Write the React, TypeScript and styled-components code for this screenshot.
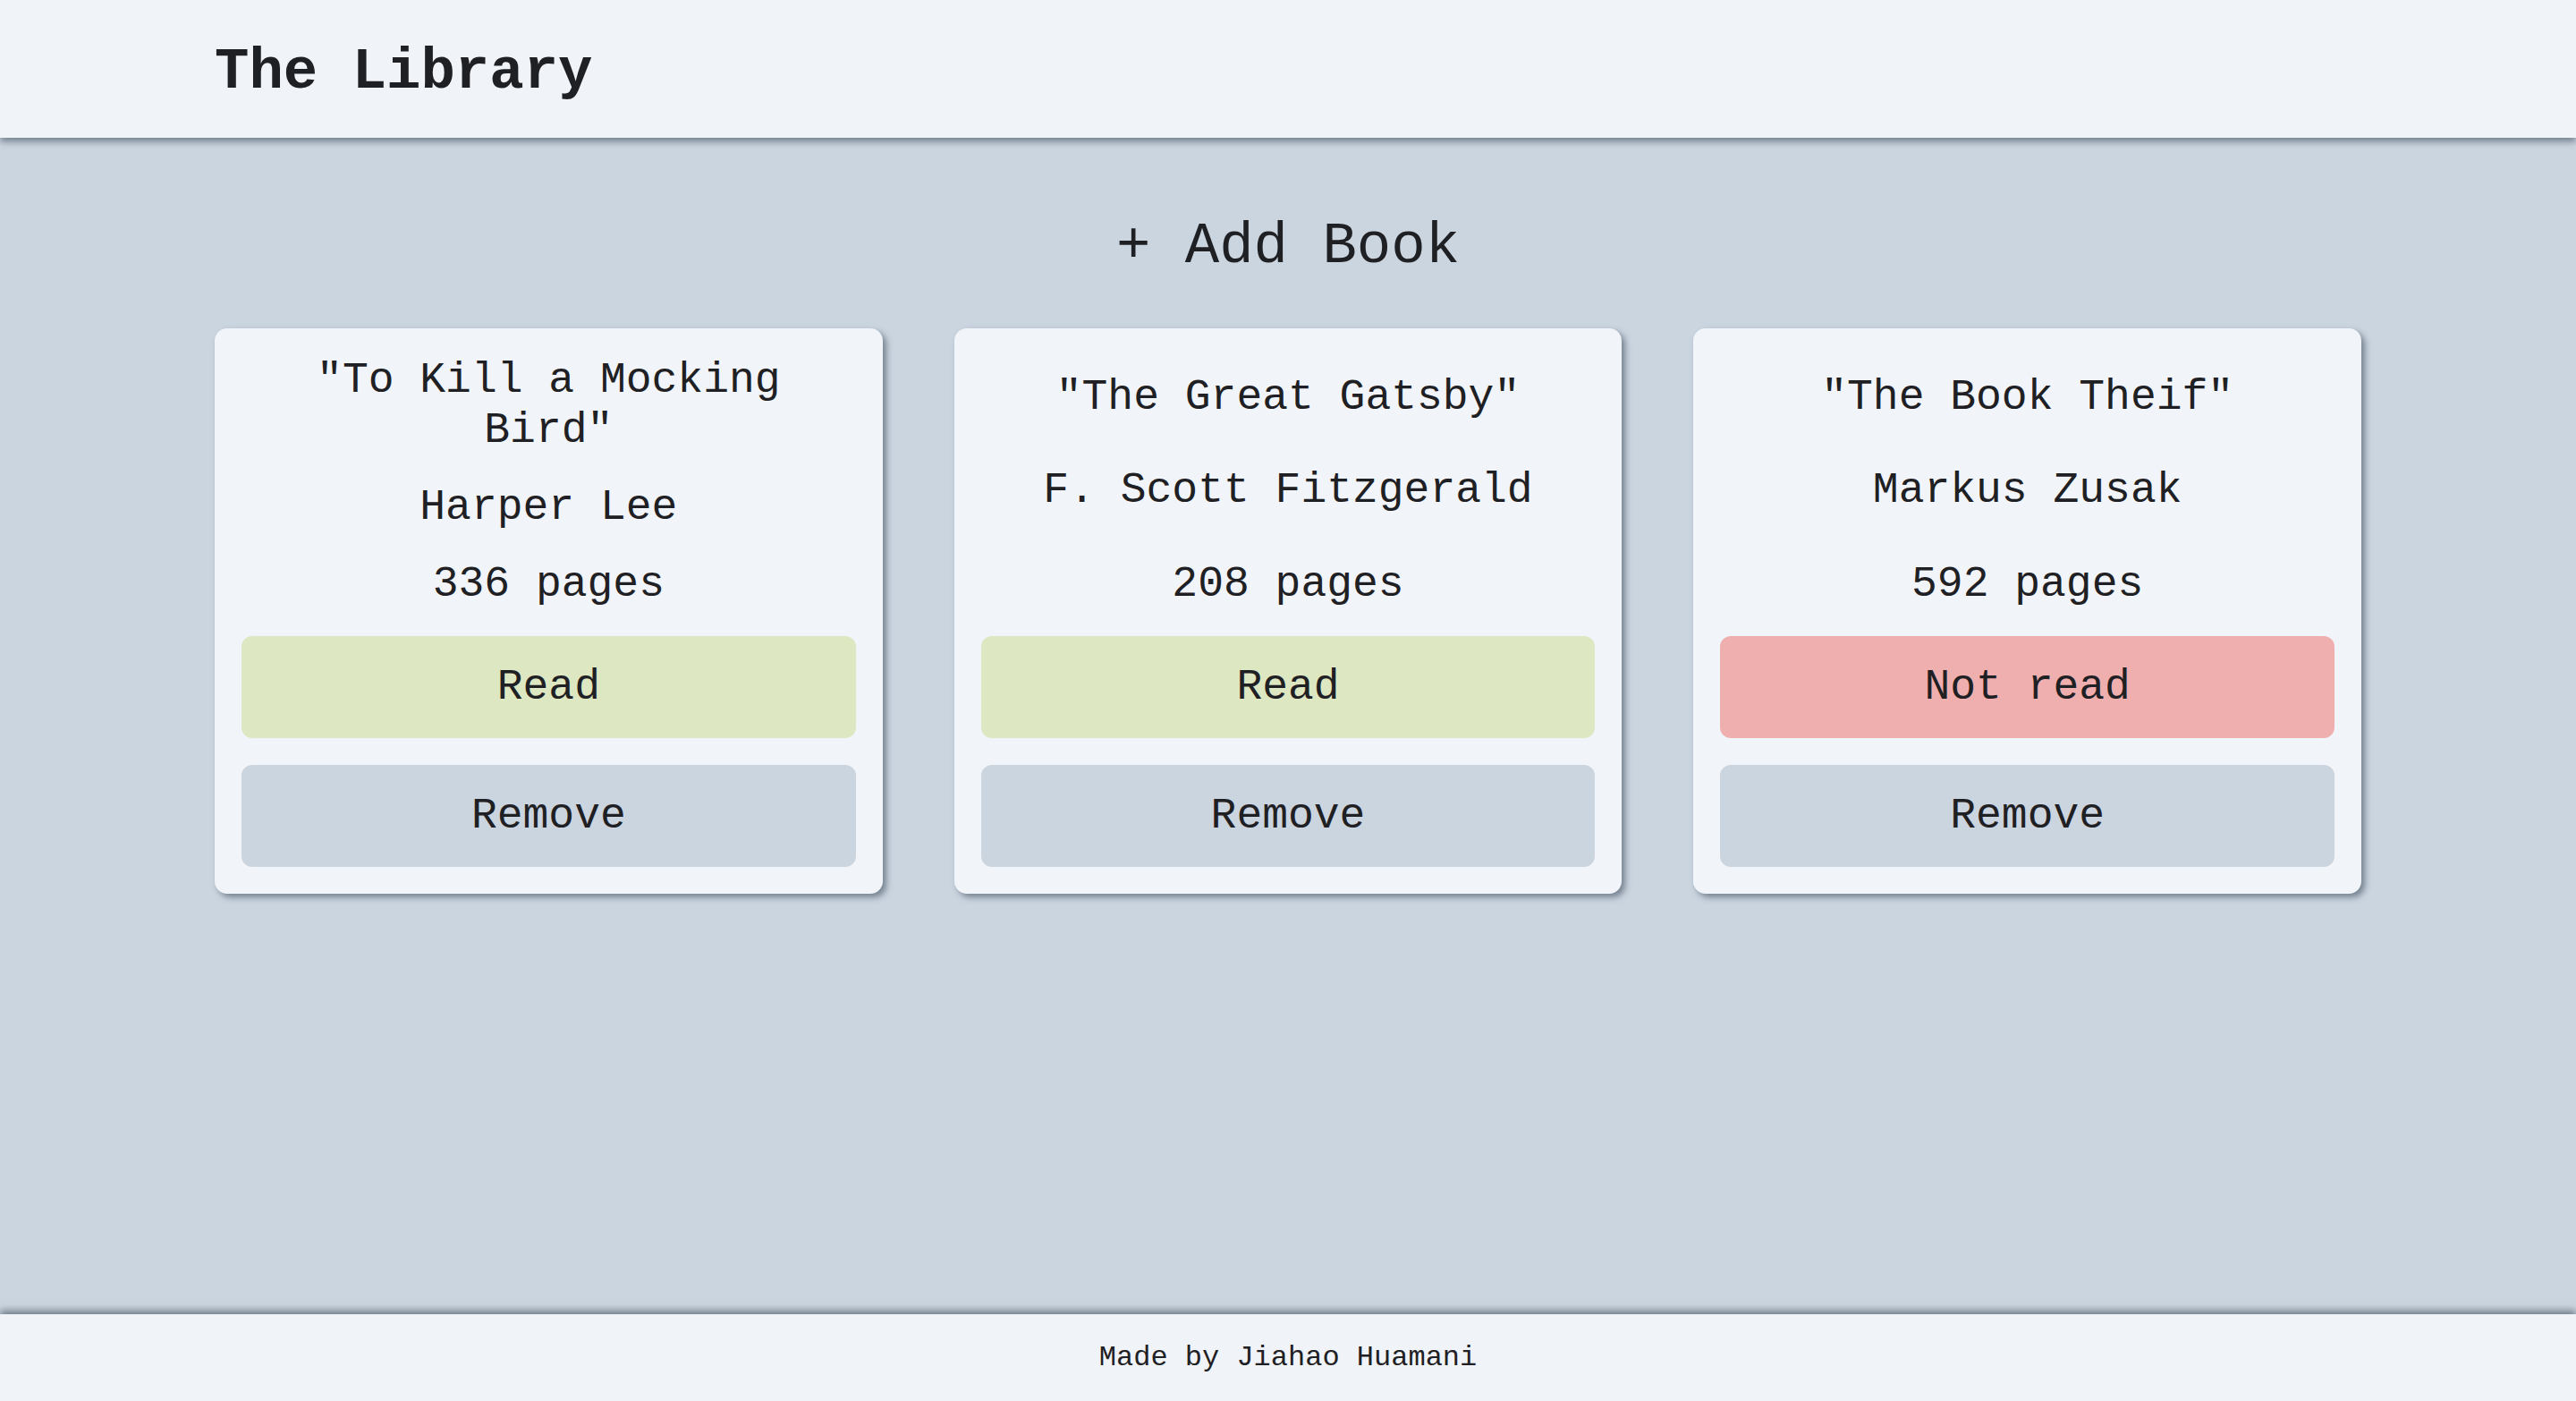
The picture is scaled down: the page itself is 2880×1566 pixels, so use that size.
import React from "react";
import styled, { createGlobalStyle } from "styled-components";

const GlobalStyle = createGlobalStyle`
  * {
    box-sizing: border-box;
  }

  body {
    margin: 0;
    font-family: "Liberation Mono", "Courier New", monospace;
    color: #1f2023;
    background: #cbd5e0;
  }
`;

const Page = styled.div`
  display: flex;
  flex-direction: column;
  min-height: 100vh;
`;

const Header = styled.header`
  height: 154px;
  background: #f0f4f9;
  box-shadow: 0 4px 8px rgba(50, 65, 80, 0.6);
  position: relative;
  z-index: 1;
`;

const HeaderInner = styled.div`
  max-width: 2400px;
  height: 100%;
  margin: 0 auto;
  padding-top: 8px;
  display: flex;
  align-items: center;
`;

const Title = styled.h1`
  margin: 0;
  font-size: 64px;
  font-weight: 700;
`;

const Main = styled.main`
  flex: 1;
  display: flex;
  flex-direction: column;
  align-items: center;
  padding: 86px 0 80px;
`;

const AddButton = styled.button`
  border: none;
  background: transparent;
  padding: 0;
  font-family: inherit;
  font-size: 64px;
  line-height: 72px;
  color: inherit;
  cursor: pointer;
  margin-bottom: 55px;
`;

const Grid = styled.div`
  width: 2400px;
  display: grid;
  grid-template-columns: repeat(3, 1fr);
  gap: 80px;
`;

const Card = styled.div`
  display: flex;
  flex-direction: column;
  gap: 30px;
  padding: 30px;
  background: #f1f5f9;
  border-radius: 14px;
  box-shadow: 4px 4px 7px rgba(60, 75, 90, 0.6);
`;

const CardText = styled.p`
  margin: auto 0 0;
  font-size: 48px;
  line-height: 56px;
  text-align: center;
  padding: 0 60px;
`;

const CardButton = styled.button<{ $tone: "read" | "unread" | "plain" }>`
  height: 114px;
  margin: 0;
  border: none;
  border-radius: 12px;
  font-family: inherit;
  font-size: 48px;
  color: #1f2023;
  cursor: pointer;
  background: ${({ $tone }) =>
    $tone === "read" ? "#dde7c1" : $tone === "unread" ? "#efafaf" : "#cbd5e0"};
`;

const Footer = styled.footer`
  height: 97px;
  background: #f0f4f9;
  box-shadow: 0 -4px 8px rgba(50, 65, 80, 0.6);
  display: flex;
  align-items: center;
  justify-content: center;
  font-size: 32px;
`;

interface IBook {
  title: string;
  author: string;
  pages: number;
  read: boolean;
}

const books: IBook[] = [
  { title: "To Kill a Mocking Bird", author: "Harper Lee", pages: 336, read: true },
  { title: "The Great Gatsby", author: "F. Scott Fitzgerald", pages: 208, read: true },
  { title: "The Book Theif", author: "Markus Zusak", pages: 592, read: false },
];

const BookCard = ({ title, author, pages, read }: IBook) => {
  return (
    <Card>
      <CardText>"{title}"</CardText>
      <CardText>{author}</CardText>
      <CardText>{pages} pages</CardText>
      <CardButton $tone={read ? "read" : "unread"}>{read ? "Read" : "Not read"}</CardButton>
      <CardButton $tone="plain">Remove</CardButton>
    </Card>
  );
};

const App = () => {
  return (
    <Page>
      <GlobalStyle />
      <Header>
        <HeaderInner>
          <Title>The Library</Title>
        </HeaderInner>
      </Header>
      <Main>
        <AddButton>+ Add Book</AddButton>
        <Grid>
          {books.map((book) => (
            <BookCard key={book.title} {...book} />
          ))}
        </Grid>
      </Main>
      <Footer>Made by Jiahao Huamani</Footer>
    </Page>
  );
};

export default App;
